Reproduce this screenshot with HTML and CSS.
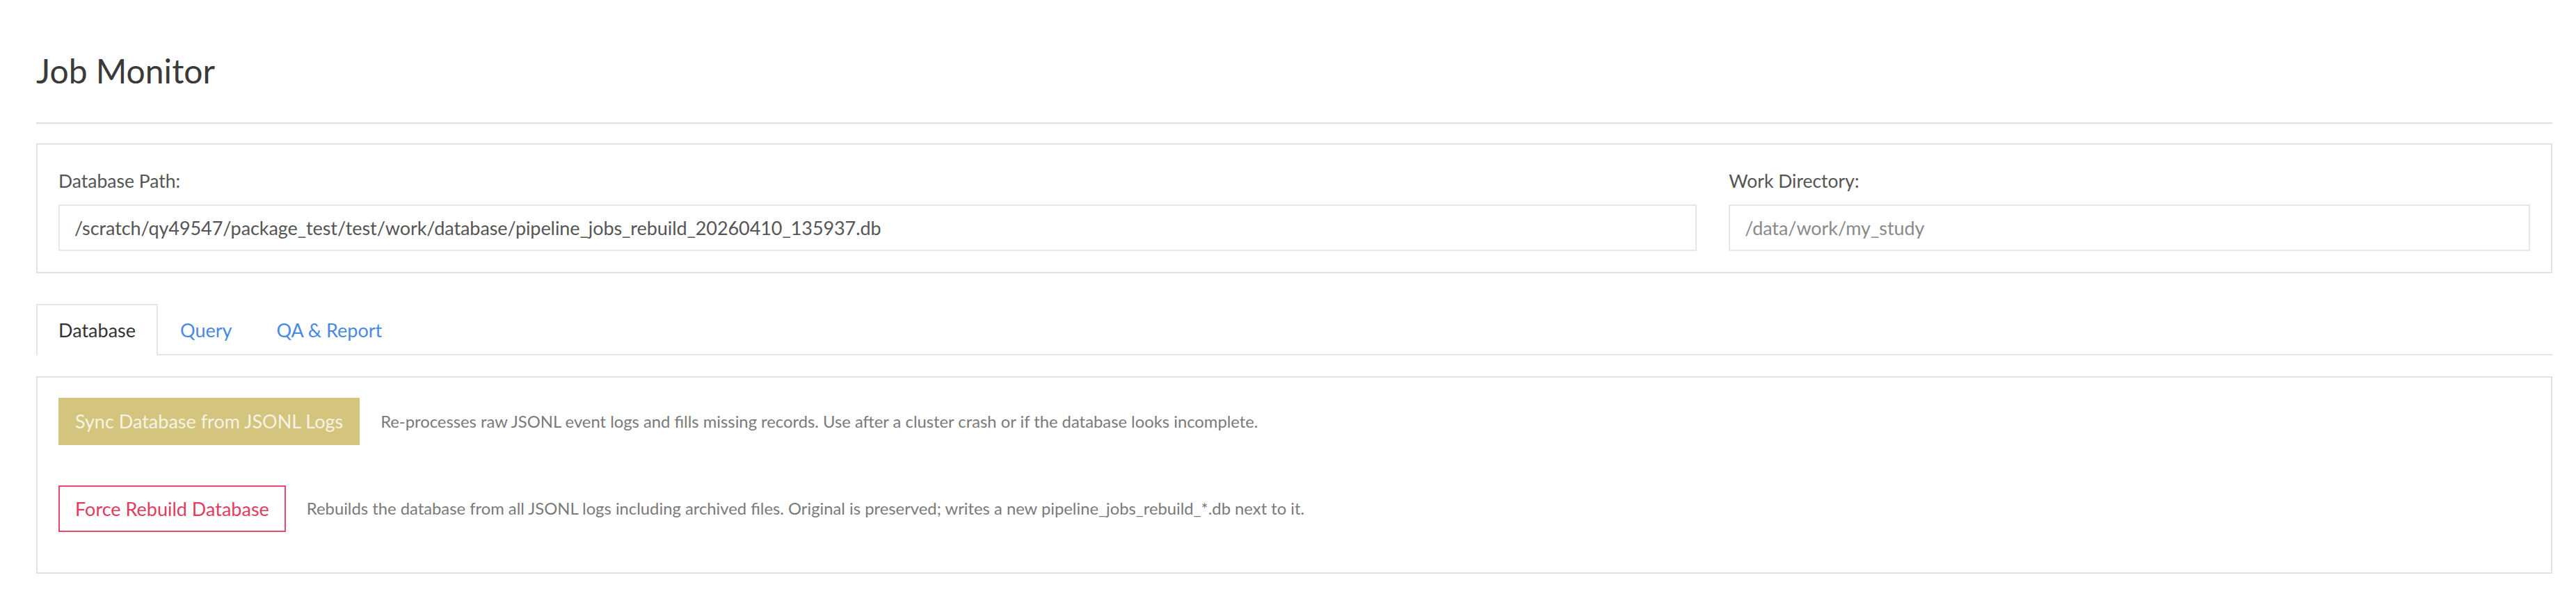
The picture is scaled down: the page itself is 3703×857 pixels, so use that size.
FILE: index.html
```html
<!DOCTYPE html>
<html>
<head>
    <title>Job Monitor</title>
    <link rel="stylesheet" href="styles.css">
</head>
<body>
    <div class="page">
        <h2 class="title">Job Monitor</h2>
        <hr class="rule">

        <section class="panel paths">
            <div class="field">
                <label for="dbPath">Database Path:</label>
                <input id="dbPath" type="text" value="/scratch/qy49547/package_test/test/work/database/pipeline_jobs_rebuild_20260410_135937.db">
            </div>
            <div class="field">
                <label for="workDir">Work Directory:</label>
                <input id="workDir" type="text" placeholder="/data/work/my_study">
            </div>
        </section>

        <nav class="tabs">
            <a class="tab active" href="#">Database</a>
            <a class="tab" href="#">Query</a>
            <a class="tab" href="#">QA &amp; Report</a>
        </nav>

        <section class="panel actions">
            <div class="action">
                <button class="btn btn-sync">Sync Database from JSONL Logs</button>
                <span class="hint">Re-processes raw JSONL event logs and fills missing records. Use after a cluster crash or if the database looks incomplete.</span>
            </div>
            <div class="action">
                <button class="btn btn-rebuild">Force Rebuild Database</button>
                <span class="hint">Rebuilds the database from all JSONL logs including archived files. Original is preserved; writes a new pipeline_jobs_rebuild_*.db next to it.</span>
            </div>
        </section>
    </div>
</body>
</html>
```

FILE: styles.css
```css
body {
    margin: 0;
    font-family: "Lato", "Open Sans", sans-serif;
    color: #555;
    background-color: #fff;
}

.page {
    padding: 73px 34px 0 52px;
}

.title {
    margin: 0;
    font-size: 48px;
    font-weight: 400;
    line-height: 1.2;
    color: #3a3a3a;
}

.rule {
    margin: 45px 0 28px;
    border: 0;
    border-top: 2px solid #dedede;
}

.panel {
    border: 2px solid #e2e2e2;
    background-color: #fff;
}

/* path inputs */
.paths {
    display: grid;
    grid-template-columns: 2.045fr 1fr;
    column-gap: 46px;
    padding: 33px 30px 30px;
}

.field label {
    display: block;
    margin-bottom: 15px;
    font-size: 26.5px;
    line-height: 38px;
    color: #555;
}

.field input {
    display: block;
    box-sizing: border-box;
    width: 100%;
    height: 67px;
    padding: 0 21px;
    border: 2px solid #e6e6ee;
    font-family: inherit;
    font-size: 27px;
    letter-spacing: -0.08px;
    color: #555;
    outline: none;
}

.field input::placeholder {
    color: #8a8a8a;
}

/* tabs */
.tabs {
    display: flex;
    margin-top: 44px;
    border-bottom: 2px solid #e6e6ee;
}

.tab {
    padding: 17px 30px;
    border: 2px solid transparent;
    border-bottom: 0;
    margin-bottom: -2px;
    font-size: 27px;
    line-height: 38px;
    color: #4a88e6;
    text-decoration: none;
}

.tab.active {
    border-color: #e6e6e6;
    background-color: #fff;
    color: #333;
}

/* actions */
.actions {
    margin-top: 30px;
    padding: 29px 30px 0;
}

.action {
    display: flex;
    align-items: center;
    margin-bottom: 58px;
}

.btn {
    box-sizing: border-box;
    height: 68px;
    padding: 0 22px;
    border: 2px solid transparent;
    font-family: inherit;
    font-size: 27px;
    cursor: pointer;
}

.btn-sync {
    background-color: #d3c47e;
    border-color: #d3c47e;
    color: #f7f3e4;
}

.btn-rebuild {
    height: 67px;
    background-color: #fff;
    border-color: #e8486b;
    color: #e23b61;
}

.hint {
    margin-left: 30px;
    font-size: 23.8px;
    color: #7a7a7a;
}
```
